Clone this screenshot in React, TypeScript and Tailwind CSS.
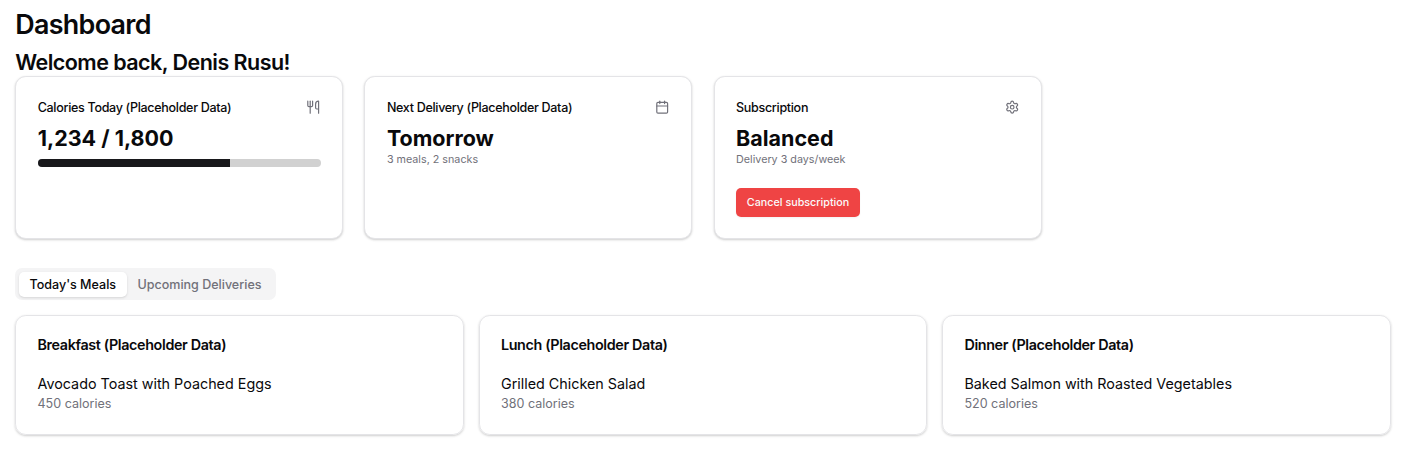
import { Calendar, Settings, Utensils } from "lucide-react";
import type { ReactNode } from "react";

function StatCard({ title, icon, children }: { title: string; icon: ReactNode; children: ReactNode }) {
  return (
    <section className="h-[163px] w-[328px] rounded-[10.8px] border border-[#e4e4e7] bg-white px-[21.5px] pt-[22px] shadow-[0_1px_3px_0_rgba(0,0,0,0.1),0_1px_2px_0_rgba(0,0,0,0.1)]">
      <div className="flex h-[18px] items-center justify-between">
        <h3 className="text-[12.54px] font-medium tracking-[-0.3135px]">{title}</h3>
        {icon}
      </div>
      {children}
    </section>
  );
}

const meals = [
  { title: "Breakfast (Placeholder Data)", name: "Avocado Toast with Poached Eggs", calories: 450 },
  { title: "Lunch (Placeholder Data)", name: "Grilled Chicken Salad", calories: 380 },
  { title: "Dinner (Placeholder Data)", name: "Baked Salmon with Roasted Vegetables", calories: 520 },
];

export default function App() {
  const icon = "mb-[2px] size-[14.4px] text-[#71717a]";
  return (
    <main className="h-[455px] overflow-hidden bg-white px-[15.2px] pt-[7px] font-['Inter',sans-serif] text-[#09090b]">
      <h1 className="h-[40px] text-[26.88px] leading-[35px] font-semibold tracking-[-0.672px]">Dashboard</h1>
      <h2 className="h-[29px] text-[21.5px] leading-[31px] font-semibold tracking-[-0.5375px]">Welcome back, Denis Rusu!</h2>
      <div className="flex gap-[21.2px]">
        <StatCard title="Calories Today (Placeholder Data)" icon={<Utensils className={icon} />}>
          <p className="mt-[6px] text-[21.5px] leading-[30px] font-bold">1,234 / 1,800</p>
          <div className="mt-[6px] h-[8px] w-[283px] overflow-hidden rounded-[4px] bg-[#d1d1d1]">
            <div className="h-full w-[192.4px] bg-[#18181b]" />
          </div>
        </StatCard>
        <StatCard title="Next Delivery (Placeholder Data)" icon={<Calendar className={icon} />}>
          <p className="mt-[6px] text-[21.5px] leading-[30px] font-bold">Tomorrow</p>
          <p className="mt-[-1px] text-[10.75px] leading-[15px] text-[#71717a]">3 meals, 2 snacks</p>
        </StatCard>
        <StatCard title="Subscription" icon={<Settings className={icon} />}>
          <p className="mt-[6px] text-[21.5px] leading-[30px] font-bold">Balanced</p>
          <p className="mt-[-1px] text-[10.75px] leading-[15px] text-[#71717a]">Delivery 3 days/week</p>
          <button className="mt-[21px] flex h-[29px] w-[124px] items-center justify-center rounded-[5px] bg-[#ef4444] pt-px text-[10.75px] font-medium text-[#fafafa] shadow-xs">Cancel subscription</button>
        </StatCard>
      </div>
      <div className="mt-[29px] flex h-[32px] w-[261px] items-center rounded-[7px] bg-[#f4f4f5] pr-[4px] pl-[3.6px] text-[12.54px] font-medium">
        <button className="h-[25px] w-[108px] rounded-[5px] bg-white pt-[2px] shadow-sm">Today's Meals</button>
        <button className="h-[25px] flex-1 pt-[2px] pr-[4px] pl-[4px] text-[#71717a]">Upcoming Deliveries</button>
      </div>
      <div className="mt-[15px] grid grid-cols-3 gap-[14.8px]">
        {meals.map((meal) => (
          <article key={meal.title} className="h-[120px] rounded-[10.8px] border border-[#e4e4e7] pr-[21.5px] pl-[21.3px] pt-[19px] shadow-[0_1px_3px_0_rgba(0,0,0,0.1),0_1px_2px_0_rgba(0,0,0,0.1)]">
            <h3 className="text-[14.33px] leading-[19px] font-semibold tracking-[-0.358px]">{meal.title}</h3>
            <p className="mt-[19px] text-[14.33px] leading-[22px]">{meal.name}</p>
            <p className="text-[12.54px] leading-[18px] text-[#71717a]">{meal.calories} calories</p>
          </article>
        ))}
      </div>
    </main>
  );
}
